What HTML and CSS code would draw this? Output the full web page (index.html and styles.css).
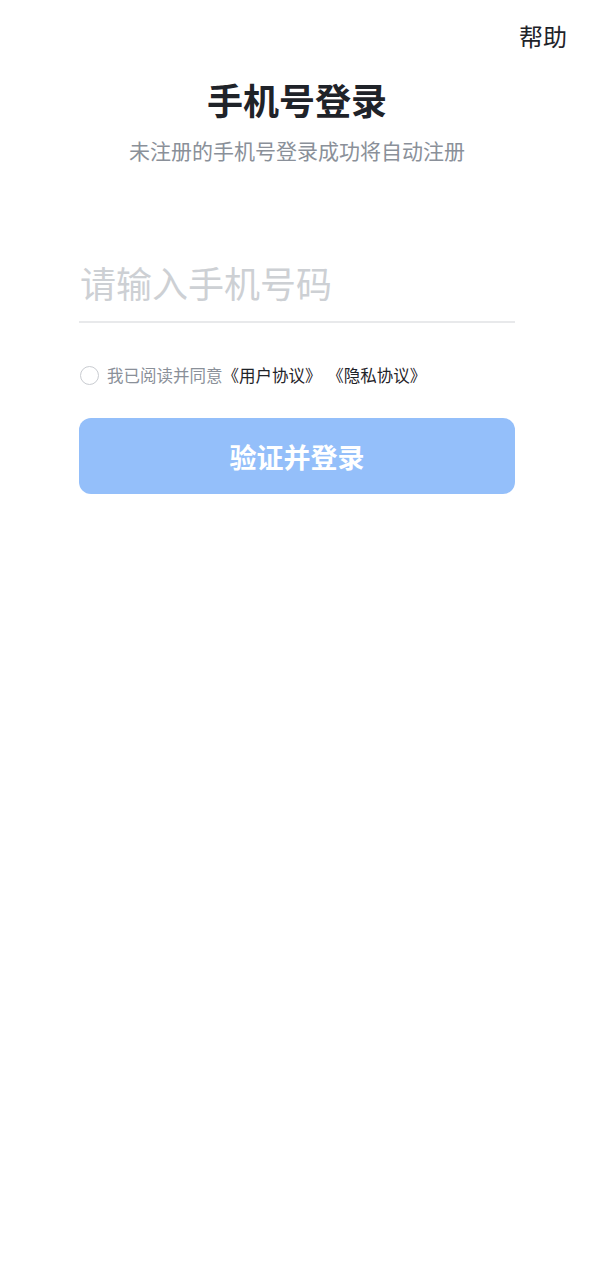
FILE: index.html
```html
<!DOCTYPE html>
<html lang="zh-CN">
<head>
  <meta charset="UTF-8">
  <title>手机号登录</title>
  <link rel="stylesheet" href="styles.css">
</head>
<body>
  <div class="topbar">
    <a class="help" href="#">帮助</a>
  </div>

  <div class="header">
    <h1>手机号登录</h1>
    <p class="sub">未注册的手机号登录成功将自动注册</p>
  </div>

  <div class="form">
    <input type="tel" class="phone" placeholder="请输入手机号码">

    <label class="agree">
      <span class="radio"></span>
      <span class="agree-text">我已阅读并同意<a href="#">《用户协议》</a><a class="second" href="#">《隐私协议》</a></span>
    </label>

    <button class="submit" disabled>验证并登录</button>
  </div>
</body>
</html>
```

FILE: styles.css
```css
body {
  margin: 0;
  background: #fff;
  font-family: "Noto Sans CJK SC", "Noto Sans", sans-serif;
  color: #1f2329;
}

.topbar {
  display: flex;
  justify-content: flex-end;
  padding: 18px 27px 0 0;
  height: 40px;
}

.help {
  font-size: 24px;
  line-height: 36px;
  color: #1f2329;
  text-decoration: none;
}

.header {
  text-align: center;
  margin-top: 15px;
}

.header h1 {
  margin: 0;
  font-size: 36px;
  line-height: 52px;
  font-weight: 700;
  color: #1f2329;
}

.sub {
  margin: 10px 0 0;
  font-size: 21px;
  line-height: 30px;
  color: #8a9099;
}

.form {
  margin: 0 79px;
  padding-top: 88px;
}

.phone {
  display: block;
  width: 100%;
  box-sizing: border-box;
  border: none;
  border-bottom: 2px solid #e8e9eb;
  outline: none;
  padding: 0 0 10px 1px;
  font-family: inherit;
  font-size: 36px;
  line-height: 58px;
  color: #1f2329;
}

.phone::placeholder {
  color: #cdd0d4;
}

.agree {
  display: flex;
  align-items: center;
  margin-top: 40px;
  font-size: 16.5px;
  line-height: 24px;
  color: #8a9099;
}

.radio {
  width: 17px;
  height: 17px;
  border: 1.5px solid #c9ccd1;
  border-radius: 50%;
  margin: 0 8px 0 1px;
}

.agree a {
  color: #1f2329;
  text-decoration: none;
}

.agree .second {
  margin-left: 14px;
}

.submit {
  display: block;
  width: 100%;
  height: 76px;
  margin-top: 31px;
  border: none;
  border-radius: 12px;
  background: #94bffa;
  color: #fff;
  font-family: inherit;
  font-size: 27px;
  font-weight: 700;
}
```
